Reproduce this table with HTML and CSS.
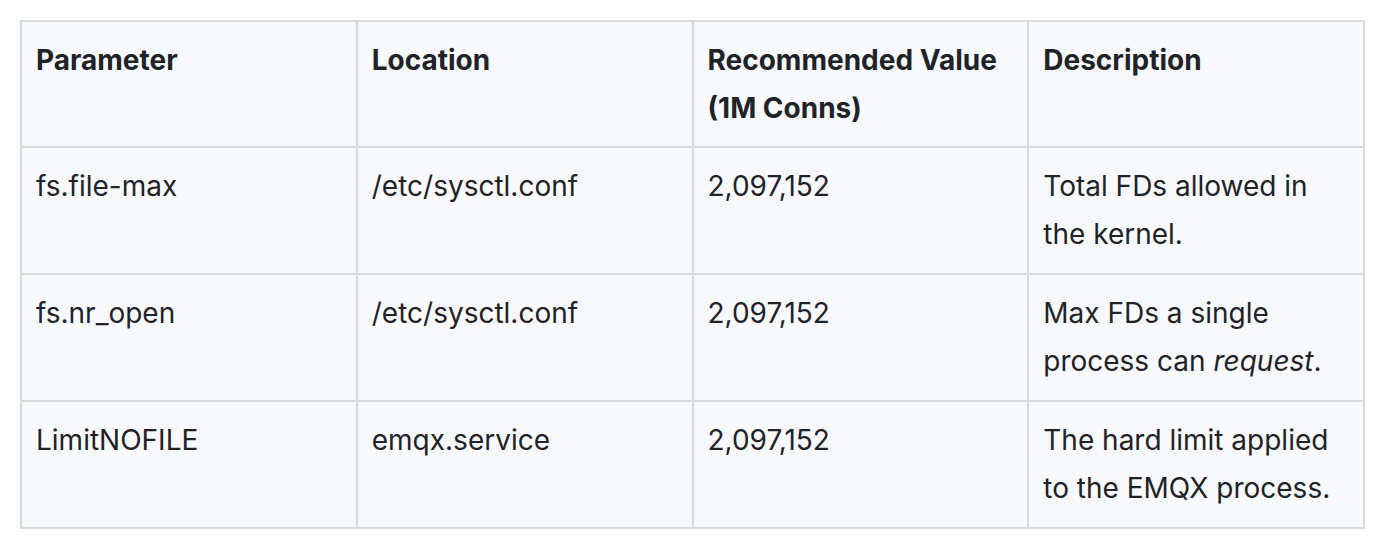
FILE: index.html
```html
<!DOCTYPE html>
<html lang="en">
<head>
    <meta charset="UTF-8">
    <meta name="viewport" content="width=device-width, initial-scale=1.0">
    <title>EMQX FD Limits</title>
    <link rel="stylesheet" href="styles.css">
</head>
<body>
    <table class="params">
        <thead>
            <tr>
                <th>Parameter</th>
                <th>Location</th>
                <th>Recommended Value (1M Conns)</th>
                <th>Description</th>
            </tr>
        </thead>
        <tbody>
            <tr>
                <td>fs.file-max</td>
                <td>/etc/sysctl.conf</td>
                <td>2,097,152</td>
                <td>Total FDs allowed in the kernel.</td>
            </tr>
            <tr>
                <td>fs.nr_open</td>
                <td>/etc/sysctl.conf</td>
                <td>2,097,152</td>
                <td>Max FDs a single process can <em>request</em>.</td>
            </tr>
            <tr>
                <td>LimitNOFILE</td>
                <td>emqx.service</td>
                <td>2,097,152</td>
                <td>The hard limit applied to the EMQX process.</td>
            </tr>
        </tbody>
    </table>
</body>
</html>
```

FILE: styles.css
```css
body {
    font-family: Inter, "Noto Sans", sans-serif;
    background-color: #ffffff;
    color: #1f2328;
    margin: 0;
    padding: 20px;
}
.params {
    width: 1345px;
    border-collapse: collapse;
    table-layout: fixed;
    font-size: 28px;
    line-height: 48px;
}
.params th, .params td {
    background-color: #f8f9fc;
    border: 2px solid #d9dadd;
    padding: 14px 14px;
    text-align: left;
    vertical-align: top;
}
.params td {
    padding-bottom: 15px;
}
.params th {
    font-weight: 700;
}
```
